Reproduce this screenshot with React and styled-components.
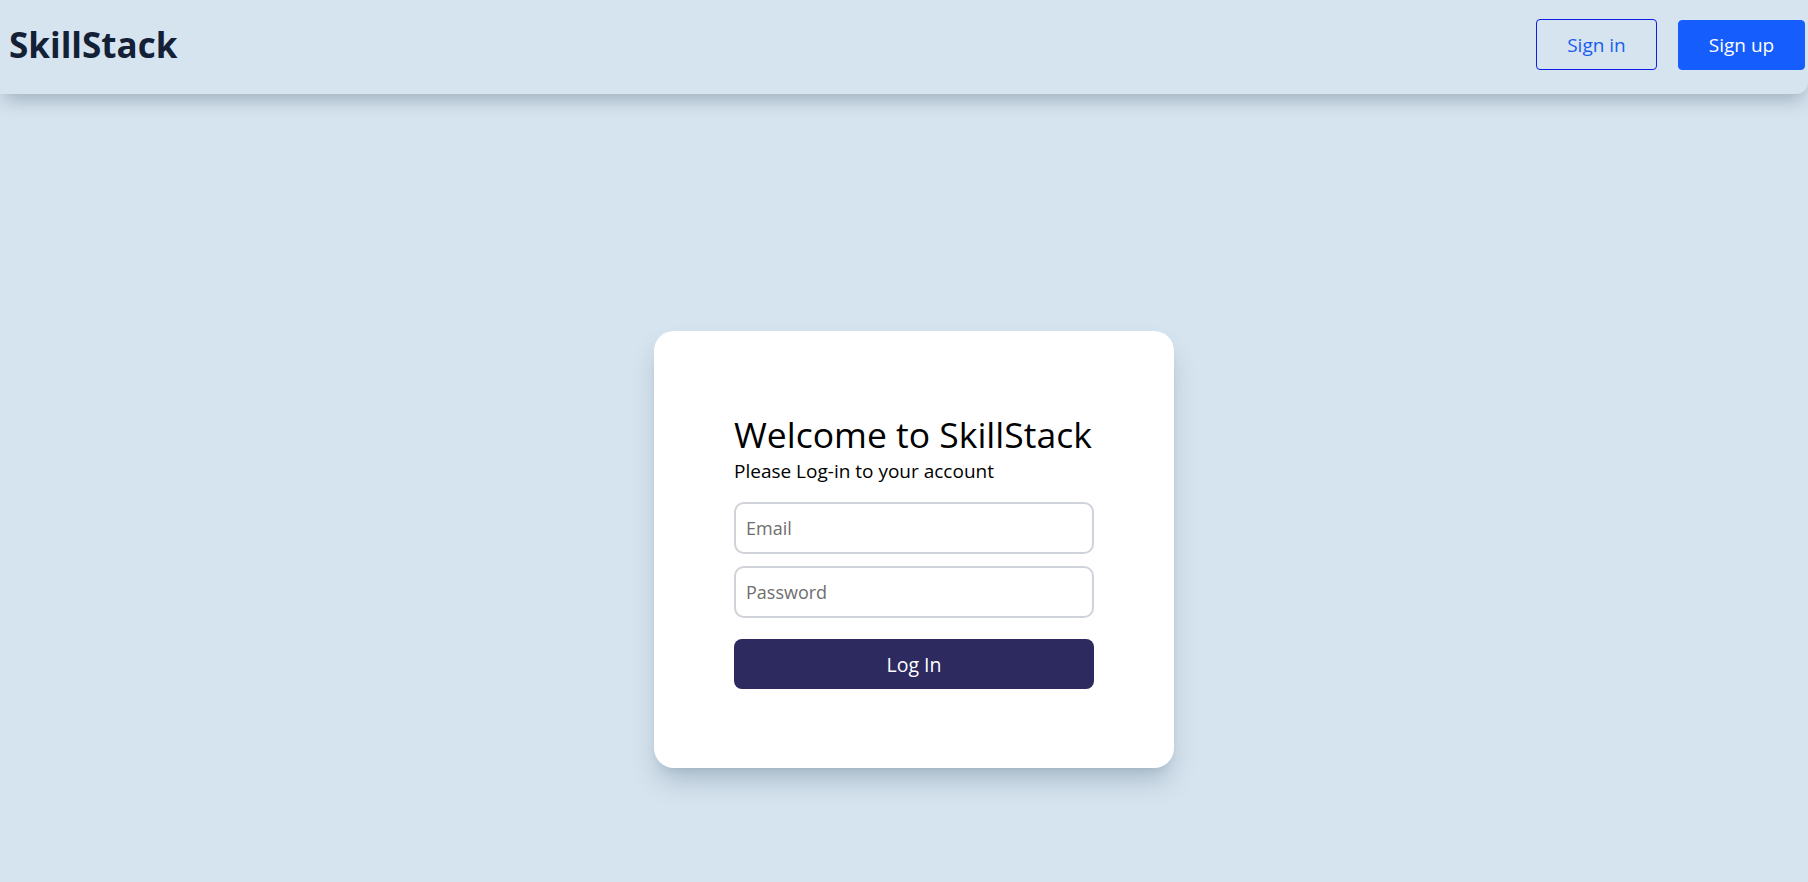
import React, { useState } from 'react';
import styled, { createGlobalStyle } from 'styled-components';

const GlobalStyle = createGlobalStyle`
  * {
    box-sizing: border-box;
  }

  body {
    margin: 0;
    background-color: #d6e4ef;
    font-family: 'Open Sans', 'Noto Sans', sans-serif;
  }
`;

// Top navigation
const Header = styled.header`
  height: 94px;
  display: flex;
  align-items: center;
  justify-content: space-between;
  padding: 0 3px 5px 9px;
  background-color: #d6e4ef;
  border-bottom-right-radius: 12px;
  box-shadow: 0 10px 18px -4px rgba(60, 80, 100, 0.35);
  position: relative;
  z-index: 1;
`;

const Logo = styled.h1`
  margin: 0;
  font-size: 35px;
  font-weight: 700;
  color: #132035;
`;

const NavActions = styled.div`
  display: flex;
  align-items: center;
  gap: 21px;
`;

const NavButton = styled.button`
  height: ${(p) => (p.$filled ? '50px' : '51px')};
  min-width: ${(p) => (p.$filled ? '127px' : '121px')};
  padding: 0 24px;
  font-family: inherit;
  font-size: 19px;
  border-radius: 4px;
  cursor: pointer;
  border: 1px solid ${(p) => (p.$filled ? '#155dfc' : '#0d1ee6')};
  background-color: ${(p) => (p.$filled ? '#155dfc' : 'transparent')};
  color: ${(p) => (p.$filled ? '#ffffff' : '#1a5cf0')};
`;

// Page body
const Main = styled.main`
  display: flex;
  justify-content: center;
  padding: 237px 0 40px 20px;
`;

const Card = styled.div`
  width: 520px;
  padding: 79px 80px;
  background-color: #ffffff;
  border-radius: 20px;
  box-shadow: 0 16px 26px -4px rgba(70, 95, 120, 0.3),
    0 6px 10px -6px rgba(70, 95, 120, 0.2);
`;

const Title = styled.h2`
  margin: 0;
  font-size: 35.5px;
  font-weight: 400;
  line-height: 48px;
  white-space: nowrap;
  color: #000000;
`;

const Subtitle = styled.p`
  margin: 0 0 17px;
  font-size: 19px;
  line-height: 27px;
  color: #000000;
`;

const Form = styled.form`
  display: flex;
  flex-direction: column;
  gap: 12px;
`;

const Input = styled.input`
  height: 52px;
  width: 100%;
  padding: 0 10px;
  font-family: inherit;
  font-size: 18px;
  color: #222;
  border: 2px solid #cfd3d9;
  border-radius: 10px;
  outline: none;

  &::placeholder {
    color: #6e6e6e;
  }
`;

const SubmitButton = styled.button`
  height: 50px;
  margin-top: 9px;
  width: 100%;
  font-family: inherit;
  font-size: 19.5px;
  color: #ffffff;
  background-color: #2c2a5e;
  border: none;
  border-radius: 8px;
  cursor: pointer;
`;

const App = () => {
  const [email, setEmail] = useState('');
  const [password, setPassword] = useState('');

  return (
    <>
      <GlobalStyle />
      <Header>
        <Logo>SkillStack</Logo>
        <NavActions>
          <NavButton type="button">Sign in</NavButton>
          <NavButton type="button" $filled>
            Sign up
          </NavButton>
        </NavActions>
      </Header>
      <Main>
        <Card>
          <Title>Welcome to SkillStack</Title>
          <Subtitle>Please Log-in to your account</Subtitle>
          <Form onSubmit={(e) => e.preventDefault()}>
            <Input
              type="email"
              placeholder="Email"
              value={email}
              onChange={(e) => setEmail(e.target.value)}
            />
            <Input
              type="password"
              placeholder="Password"
              value={password}
              onChange={(e) => setPassword(e.target.value)}
            />
            <SubmitButton type="submit">Log In</SubmitButton>
          </Form>
        </Card>
      </Main>
    </>
  );
};

export default App;
